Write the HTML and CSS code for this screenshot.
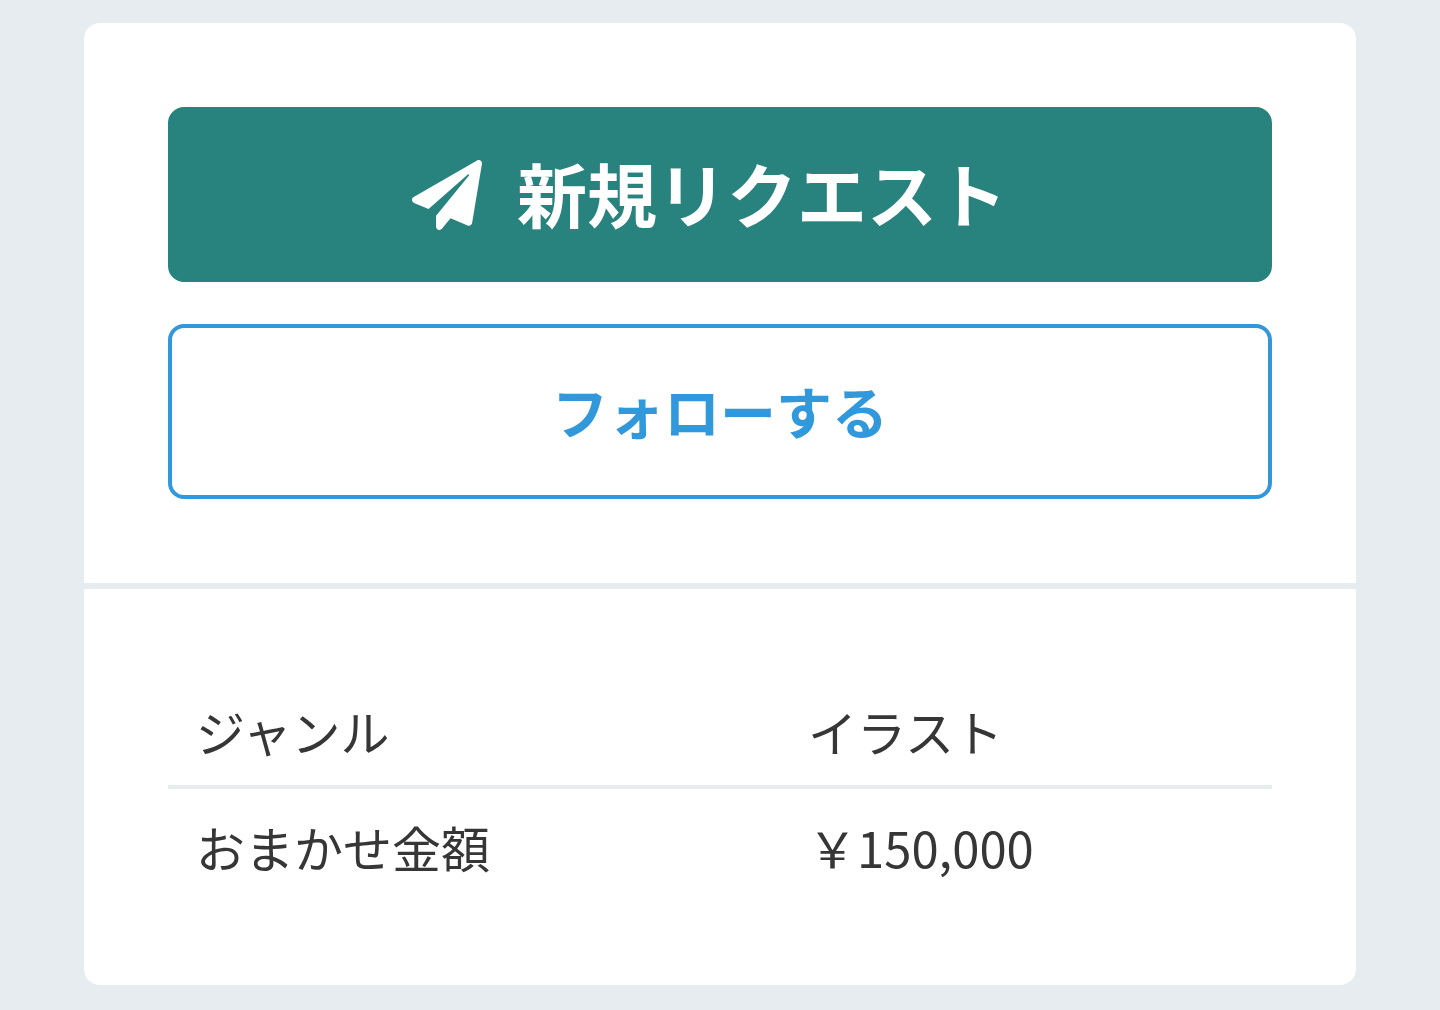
FILE: index.html
```html
<!DOCTYPE html>
<html lang="ja">
<head>
    <meta charset="UTF-8">
    <meta name="viewport" content="width=device-width, initial-scale=1.0">
    <title>新規リクエスト</title>
    <link rel="stylesheet" href="styles.css">
</head>
<body>
    <main class="card">
        <div class="actions">
            <button type="button" class="button button-primary">
                <svg class="icon" viewBox="0 0 512 512" aria-hidden="true">
                    <path fill="currentColor" d="M476 3.200L12.500 270.600c-18.100 10.400-15.800 35.600 2.200 43.200L121 358.400l287.300-253.200c5.500-4.900 13.300 2.600 8.600 8.300L176 407v80.500c0 23.600 28.500 32.900 42.500 15.800L282 426l124.600 52.200c14.200 6 30.400-2.900 33-18.200l72-432C515 7.800 493.300-6.800 476 3.200z"/>
                </svg>
                <span class="label">新規リクエスト</span>
            </button>
            <button type="button" class="button button-follow">
                <span class="label">フォローする</span>
            </button>
        </div>
        <div class="details">
            <table class="table">
                <tbody>
                    <tr>
                        <th scope="row">ジャンル</th>
                        <td>イラスト</td>
                    </tr>
                    <tr>
                        <th scope="row">おまかせ金額</th>
                        <td>￥150,000</td>
                    </tr>
                </tbody>
            </table>
        </div>
    </main>
</body>
</html>
```

FILE: styles.css
```css
body {
    margin: 0;
    padding: 23px 84px 25px;
    background-color: #e6ecf0;
    color: #363636;
    font-family: "Noto Sans CJK JP", sans-serif;
}
.card {
    background-color: white;
    border-radius: 16px;
}
.actions {
    display: flex;
    flex-direction: column;
    gap: 42px;
    padding: 84px;
    border-bottom: 6px solid #e6ecf0;
}
.button {
    display: flex;
    align-items: center;
    justify-content: center;
    box-sizing: border-box;
    width: 100%;
    height: 175px;
    padding: 0;
    border: 4px solid transparent;
    border-radius: 16px;
    font-family: inherit;
    font-weight: bold;
    cursor: pointer;
}
.button-primary {
    gap: 35px;
    padding-right: 21px;
    background-color: #28837f;
    border-color: #28837f;
    color: white;
    font-size: 70px;
}
.button-follow {
    background-color: white;
    border-color: #3298dc;
    color: #3298dc;
    font-size: 56px;
}
.label {
    padding-bottom: 4px;
}
.icon {
    width: 70px;
    height: 70px;
}
.details {
    padding: 84px;
}
.table {
    width: 100%;
    border-collapse: collapse;
    table-layout: fixed;
    font-size: 49px;
    line-height: 72px;
}
.table th,
.table td {
    padding: 22px 32px 18px 28px;
    border-bottom: 4px solid #e6ecf0;
    font-weight: normal;
    text-align: left;
}
.table th {
    width: 50%;
}
.table tr:last-child th,
.table tr:last-child td {
    border-bottom: none;
}
```
